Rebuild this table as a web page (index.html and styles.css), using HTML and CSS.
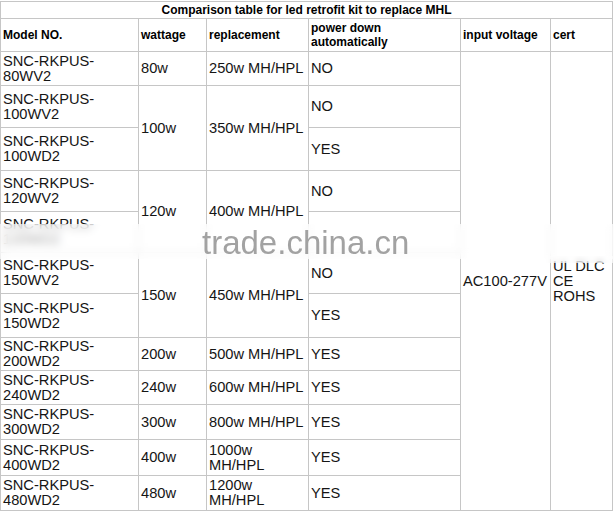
FILE: index.html
```html
<!DOCTYPE html>
<html>
<head>
<meta charset="utf-8">
<link rel="stylesheet" href="styles.css">
</head>
<body>
<div class="page">
<table class="cmp">
  <colgroup>
    <col class="c-model"><col class="c-watt"><col class="c-rep"><col class="c-pow"><col class="c-volt"><col class="c-cert">
  </colgroup>
  <tr class="r-title"><td colspan="6" class="title">Comparison table for led retrofit kit to replace MHL</td></tr>
  <tr class="r-head">
    <td class="hd">Model NO.</td>
    <td class="hd">wattage</td>
    <td class="hd">replacement</td>
    <td class="hd">power down<br>automatically</td>
    <td class="hd">input voltage</td>
    <td class="hd">cert</td>
  </tr>
  <tr class="h34">
    <td>SNC-RKPUS-<br>80WV2</td><td>80w</td><td>250w MH/HPL</td><td>NO</td>
    <td rowspan="12">AC100-277V</td>
    <td rowspan="12">UL DLC<br>CE<br>ROHS</td>
  </tr>
  <tr class="h42"><td>SNC-RKPUS-<br>100WV2</td><td rowspan="2">100w</td><td rowspan="2">350w MH/HPL</td><td>NO</td></tr>
  <tr class="h43"><td>SNC-RKPUS-<br>100WD2</td><td>YES</td></tr>
  <tr class="h41"><td>SNC-RKPUS-<br>120WV2</td><td rowspan="2">120w</td><td rowspan="2">400w MH/HPL</td><td>NO</td></tr>
  <tr class="h41"><td>SNC-RKPUS-<br>120WD2</td><td></td></tr>
  <tr class="h41"><td>SNC-RKPUS-<br>150WV2</td><td rowspan="2">150w</td><td rowspan="2">450w MH/HPL</td><td>NO</td></tr>
  <tr class="h44"><td>SNC-RKPUS-<br>150WD2</td><td>YES</td></tr>
  <tr class="h33"><td>SNC-RKPUS-<br>200WD2</td><td>200w</td><td>500w MH/HPL</td><td>YES</td></tr>
  <tr class="h34"><td>SNC-RKPUS-<br>240WD2</td><td>240w</td><td>600w MH/HPL</td><td>YES</td></tr>
  <tr class="h35"><td>SNC-RKPUS-<br>300WD2</td><td>300w</td><td>800w MH/HPL</td><td>YES</td></tr>
  <tr class="h36"><td>SNC-RKPUS-<br>400WD2</td><td>400w</td><td>1000w<br>MH/HPL</td><td>YES</td></tr>
  <tr class="h35"><td>SNC-RKPUS-<br>480WD2</td><td>480w</td><td>1200w<br>MH/HPL</td><td>YES</td></tr>
</table>
<div class="blur-band"></div>
<div class="blur-band-right"></div>
<div class="watermark">trade.china.cn</div>
</div>
</body>
</html>
```
FILE: styles.css
```css
html, body {
  margin: 0;
  padding: 0;
  background: #fff;
}
.page {
  position: relative;
  width: 614px;
  height: 511px;
  padding-top: 1px;
  box-sizing: border-box;
  overflow: hidden;
}
.cmp {
  border-collapse: collapse;
  table-layout: fixed;
  width: 612px;
  font-family: "Liberation Sans", Arial, sans-serif;
  font-size: 14.67px;
  line-height: 15px;
  color: #151515;
}
.c-model { width: 138px; }
.c-watt { width: 68px; }
.c-rep { width: 102px; }
.c-pow { width: 152px; }
.c-volt { width: 90px; }
.c-cert { width: 62px; }
.cmp td {
  border: 1px solid #c6c6c6;
  padding: 0 2px 0 2px;
  vertical-align: middle;
  text-align: left;
  white-space: nowrap;
  overflow: hidden;
}
.cmp td.title {
  text-align: center;
  font-weight: bold;
  font-size: 12px;
  line-height: 14px;
  color: #000;
}
.cmp td.hd {
  font-weight: bold;
  font-size: 12px;
  line-height: 14px;
  color: #000;
}
.r-title { height: 17px; }
.r-head { height: 33px; }
.h33 { height: 33px; }
.h34 { height: 34px; }
.h35 { height: 35px; }
.h36 { height: 36px; }
.h41 { height: 41px; }
.h42 { height: 42px; }
.h43 { height: 43px; }
.h44 { height: 44px; }
.blur-band {
  position: absolute;
  left: 0;
  top: 224px;
  width: 614px;
  height: 35px;
  background: rgba(255, 255, 255, 0.6);
  backdrop-filter: blur(4px);
}
.blur-band-right {
  position: absolute;
  left: 546px;
  top: 256px;
  width: 68px;
  height: 7px;
  background: rgba(255, 255, 255, 0.5);
  backdrop-filter: blur(3px);
}
.watermark {
  position: absolute;
  left: 202px;
  top: 226px;
  font-family: "Liberation Sans", Arial, sans-serif;
  font-size: 33px;
  line-height: 33px;
  color: #a2a2a2;
  white-space: nowrap;
}
```
